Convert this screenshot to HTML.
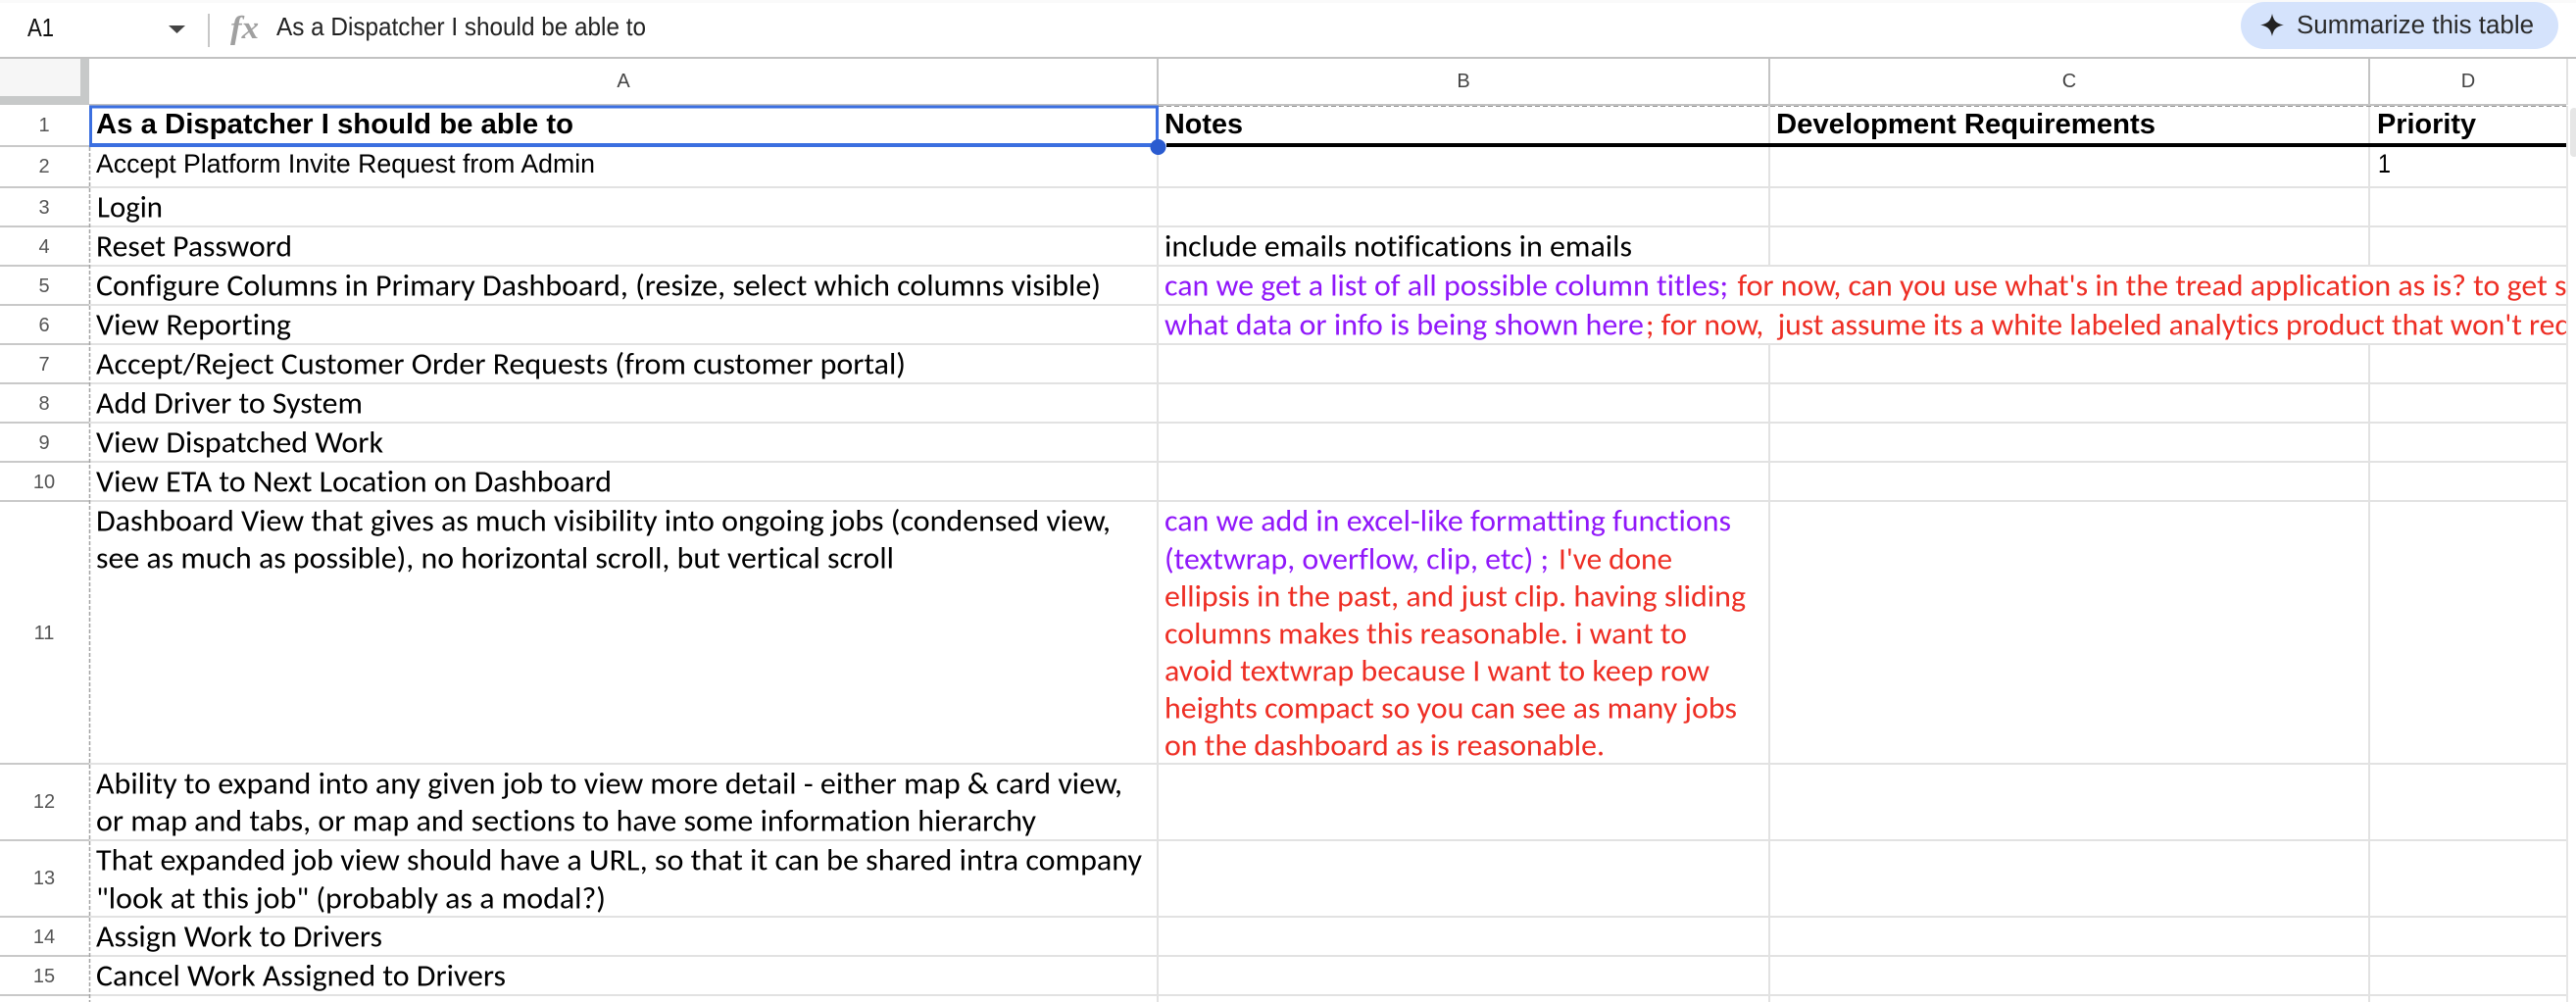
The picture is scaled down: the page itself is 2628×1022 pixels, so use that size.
<!DOCTYPE html>
<html lang="en">
<head>
<meta charset="utf-8">
<title>Sheet</title>
<style>
html,body{margin:0;padding:0;background:#fff;width:2628px;height:1022px;overflow:hidden}
svg{display:block}
.c{font-family:"Carlito","Noto Sans CJK JP","Liberation Sans",sans-serif;font-size:30.500px;fill:#000;font-variant-ligatures:none;transform:translateY(.5px)}
.a{font-family:"Liberation Sans",Arial,sans-serif;font-size:26.500px;fill:#000}
.b{font-family:"Liberation Sans",Arial,sans-serif;font-size:29px;font-weight:700;fill:#000}
.h{font-family:"Liberation Sans",Arial,sans-serif;font-size:20px;fill:#444;text-anchor:middle}
.n{font-family:"Liberation Sans",Arial,sans-serif;font-size:20px;fill:#555;text-anchor:middle}
.p{fill:#9017fa}
.r{fill:#ee2e24}
</style>
</head>
<body>
<svg xmlns="http://www.w3.org/2000/svg" width="2628" height="1022" viewBox="0 0 2628 1022">
<defs><clipPath id="clip"><rect x="1183" y="272" width="1435" height="80"/></clipPath></defs>
<rect width="2628" height="1022" fill="#fff"/>
<rect width="2628" height="3" fill="#fafafa"/>

<!-- formula bar -->
<text x="28" y="37" font-family="Liberation Sans, sans-serif" font-size="26" fill="#111" textLength="27" lengthAdjust="spacingAndGlyphs">A1</text>
<path d="M172 26H189L180.500 34Z" fill="#444"/>
<rect x="212" y="14" width="2" height="34" fill="#c7c7c7"/>
<text x="235" y="39" font-family="Liberation Serif, serif" font-style="italic" font-weight="700" font-size="33" fill="#a0a0a0" textLength="29" lengthAdjust="spacingAndGlyphs">fx</text>
<text x="282" y="36" font-family="Liberation Sans, sans-serif" font-size="26" fill="#222" textLength="377" lengthAdjust="spacingAndGlyphs">As a Dispatcher I should be able to</text>

<!-- pill -->
<rect x="2286" y="2" width="324" height="48" rx="24" fill="#d5e3fc"/>
<path d="M2318 14C2319.500 21 2322 24 2330 25.500C2322 27 2319.500 30 2318 37C2316.500 30 2314 27 2306 25.500C2314 24 2316.500 21 2318 14Z" fill="#222"/>
<text x="2343" y="34" font-family="Liberation Sans, sans-serif" font-size="25.500" fill="#2a2a2a" textLength="242" lengthAdjust="spacingAndGlyphs">Summarize this table</text>

<!-- header row -->
<rect x="0" y="58" width="2628" height="2" fill="#c2c2c2"/>
<rect x="0" y="60" width="82" height="38" fill="#f6f6f6"/>
<rect x="82" y="60" width="9" height="47" fill="#c7c9c9"/>
<rect x="0" y="98" width="91" height="9" fill="#c7c9c9"/>
<rect x="91" y="106" width="2527" height="2" fill="#c2c2c2"/>
<rect x="1180" y="60" width="2" height="47" fill="#c4c4c4"/>
<rect x="1804" y="60" width="2" height="47" fill="#c4c4c4"/>
<rect x="2416" y="60" width="2" height="47" fill="#c4c4c4"/>
<rect x="2618" y="60" width="2" height="47" fill="#e2e2e2"/>
<text class="h" x="636" y="89">A</text>
<text class="h" x="1493" y="89">B</text>
<text class="h" x="2111" y="89">C</text>
<text class="h" x="2518" y="89">D</text>

<!-- vertical grid -->
<rect x="1180" y="108" width="2" height="914" fill="#e2e2e2"/>
<rect x="1804" y="108" width="2" height="163" fill="#e2e2e2"/>
<rect x="1804" y="351" width="2" height="671" fill="#e2e2e2"/>
<rect x="2416" y="108" width="2" height="163" fill="#e2e2e2"/>
<rect x="2416" y="351" width="2" height="671" fill="#e2e2e2"/>
<rect x="2618" y="108" width="2" height="914" fill="#e6e6e6"/>

<!-- horizontal grid -->
<g fill="#e2e2e2">
<rect x="91" y="190" width="2527" height="2"/>
<rect x="91" y="230" width="2527" height="2"/>
<rect x="91" y="270" width="2527" height="2"/>
<rect x="91" y="310" width="2527" height="2"/>
<rect x="91" y="350" width="2527" height="2"/>
<rect x="91" y="390" width="2527" height="2"/>
<rect x="91" y="430" width="2527" height="2"/>
<rect x="91" y="470" width="2527" height="2"/>
<rect x="91" y="510" width="2527" height="2"/>
<rect x="91" y="778" width="2527" height="2"/>
<rect x="91" y="856" width="2527" height="2"/>
<rect x="91" y="934" width="2527" height="2"/>
<rect x="91" y="974" width="2527" height="2"/>
<rect x="91" y="1014" width="2527" height="2"/>
</g>
<g fill="#c9c9c9">
<rect x="0" y="148" width="91" height="2"/>
<rect x="0" y="190" width="91" height="2"/>
<rect x="0" y="230" width="91" height="2"/>
<rect x="0" y="270" width="91" height="2"/>
<rect x="0" y="310" width="91" height="2"/>
<rect x="0" y="350" width="91" height="2"/>
<rect x="0" y="390" width="91" height="2"/>
<rect x="0" y="430" width="91" height="2"/>
<rect x="0" y="470" width="91" height="2"/>
<rect x="0" y="510" width="91" height="2"/>
<rect x="0" y="778" width="91" height="2"/>
<rect x="0" y="856" width="91" height="2"/>
<rect x="0" y="934" width="91" height="2"/>
<rect x="0" y="974" width="91" height="2"/>
<rect x="0" y="1014" width="91" height="2"/>
</g>
<line x1="91.500" y1="150" x2="91.500" y2="1022" stroke="#a4a4a4" stroke-width="1.500" stroke-dasharray="4 2"/>
<line x1="1182" y1="108.500" x2="2618" y2="108.500" stroke="#9a9a9a" stroke-width="1" stroke-dasharray="5 3"/>

<!-- row numbers -->
<text class="n" x="45" y="134">1</text>
<text class="n" x="45" y="176">2</text>
<text class="n" x="45" y="218">3</text>
<text class="n" x="45" y="258">4</text>
<text class="n" x="45" y="298">5</text>
<text class="n" x="45" y="338">6</text>
<text class="n" x="45" y="378">7</text>
<text class="n" x="45" y="418">8</text>
<text class="n" x="45" y="458">9</text>
<text class="n" x="45" y="498">10</text>
<text class="n" x="45" y="652">11</text>
<text class="n" x="45" y="824">12</text>
<text class="n" x="45" y="902">13</text>
<text class="n" x="45" y="962">14</text>
<text class="n" x="45" y="1002">15</text>

<!-- row 1 -->
<rect x="1190" y="146" width="1428" height="4" fill="#000"/>
<text class="b" x="98" y="136" textLength="487" lengthAdjust="spacingAndGlyphs">As a Dispatcher I should be able to</text>
<text class="b" x="1188" y="136" textLength="80" lengthAdjust="spacingAndGlyphs">Notes</text>
<text class="b" x="1812" y="136" textLength="387" lengthAdjust="spacingAndGlyphs">Development Requirements</text>
<text class="b" x="2425" y="136" textLength="101" lengthAdjust="spacingAndGlyphs">Priority</text>
<rect x="92.500" y="109" width="1088" height="38.500" fill="none" stroke="#3b6fe0" stroke-width="3"/>
<rect x="91" y="146" width="1090" height="4" fill="#3b6fe0"/>
<ellipse cx="1181.500" cy="150" rx="8" ry="8" fill="#2a5bd0"/>

<!-- column A -->
<text class="a" x="98" y="176" textLength="509" lengthAdjust="spacingAndGlyphs">Accept Platform Invite Request from Admin</text>
<text class="a" x="2426" y="176" textLength="13" lengthAdjust="spacingAndGlyphs">1</text>
<text class="c" x="99" y="221" textLength="67" lengthAdjust="spacingAndGlyphs">Login</text>
<text class="c" x="98" y="261" textLength="200" lengthAdjust="spacingAndGlyphs">Reset Password</text>
<text class="c" x="98" y="301" textLength="1025" lengthAdjust="spacingAndGlyphs">Configure Columns in Primary Dashboard, (resize, select which columns visible)</text>
<text class="c" x="98" y="341" textLength="199" lengthAdjust="spacingAndGlyphs">View Reporting</text>
<text class="c" x="98" y="381" textLength="826" lengthAdjust="spacingAndGlyphs">Accept/Reject Customer Order Requests (from customer portal)</text>
<text class="c" x="98" y="421" textLength="272" lengthAdjust="spacingAndGlyphs">Add Driver to System</text>
<text class="c" x="98" y="461" textLength="293" lengthAdjust="spacingAndGlyphs">View Dispatched Work</text>
<text class="c" x="98" y="501" textLength="526" lengthAdjust="spacingAndGlyphs">View ETA to Next Location on Dashboard</text>
<text class="c" x="98" y="541" textLength="1035" lengthAdjust="spacingAndGlyphs">Dashboard View that gives as much visibility into ongoing jobs (condensed view,</text>
<text class="c" x="98" y="579" textLength="814" lengthAdjust="spacingAndGlyphs">see as much as possible), no horizontal scroll, but vertical scroll</text>
<text class="c" x="98" y="809" textLength="1047" lengthAdjust="spacingAndGlyphs">Ability to expand into any given job to view more detail - either map &amp; card view,</text>
<text class="c" x="98" y="847" textLength="959" lengthAdjust="spacingAndGlyphs">or map and tabs, or map and sections to have some information hierarchy</text>
<text class="c" x="98" y="887" textLength="1067" lengthAdjust="spacingAndGlyphs">That expanded job view should have a URL, so that it can be shared intra company</text>
<text class="c" x="98" y="926" textLength="520" lengthAdjust="spacingAndGlyphs">"look at this job" (probably as a modal?)</text>
<text class="c" x="98" y="965" textLength="292" lengthAdjust="spacingAndGlyphs">Assign Work to Drivers</text>
<text class="c" x="98" y="1005" textLength="418" lengthAdjust="spacingAndGlyphs">Cancel Work Assigned to Drivers</text>

<!-- column B -->
<text class="c" x="1188" y="261" textLength="477" lengthAdjust="spacingAndGlyphs">include emails notifications in emails</text>
<g clip-path="url(#clip)">
<text class="c p" x="1188" y="301" textLength="575" lengthAdjust="spacingAndGlyphs">can we get a list of all possible column titles;</text>
<text class="c r" x="1772.500" y="301" textLength="846" lengthAdjust="spacingAndGlyphs">for now, can you use what's in the tread application as is? to get s</text>
<text class="c p" x="1188" y="341" textLength="489" lengthAdjust="spacingAndGlyphs">what data or info is being shown here</text>
<text class="c r" x="1679" y="341" textLength="944" lengthAdjust="spacingAndGlyphs" xml:space="preserve">; for now,  just assume its a white labeled analytics product that won't req</text>
</g>
<text class="c p" x="1188" y="541" textLength="578" lengthAdjust="spacingAndGlyphs">can we add in excel-like formatting functions</text>
<text class="c p" x="1188" y="580" textLength="392" lengthAdjust="spacingAndGlyphs">(textwrap, overflow, clip, etc) ;</text>
<text class="c r" x="1590" y="580" textLength="116" lengthAdjust="spacingAndGlyphs">I've done</text>
<text class="c r" x="1188" y="618" textLength="593" lengthAdjust="spacingAndGlyphs">ellipsis in the past, and just clip. having sliding</text>
<text class="c r" x="1188" y="656" textLength="533" lengthAdjust="spacingAndGlyphs">columns makes this reasonable. i want to</text>
<text class="c r" x="1188" y="694" textLength="556" lengthAdjust="spacingAndGlyphs">avoid textwrap because I want to keep row</text>
<text class="c r" x="1188" y="732" textLength="584" lengthAdjust="spacingAndGlyphs">heights compact so you can see as many jobs</text>
<text class="c r" x="1188" y="770" textLength="449" lengthAdjust="spacingAndGlyphs">on the dashboard as is reasonable.</text>

<!-- scrollbar thumb -->
<rect x="2622" y="110" width="8" height="50" rx="4" fill="#e6e6e6"/>
</svg>
</body>
</html>
